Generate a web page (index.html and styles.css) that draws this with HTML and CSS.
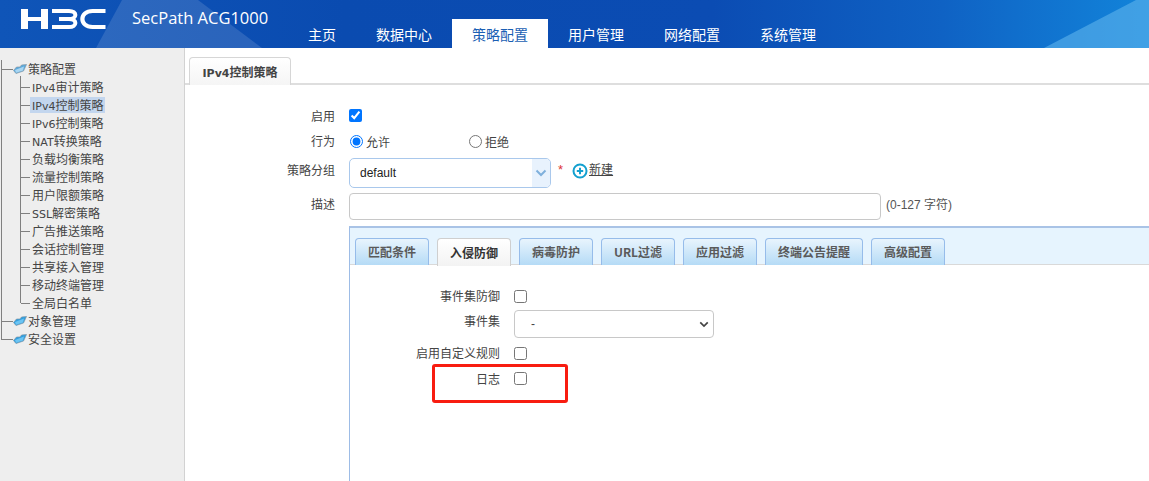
FILE: index.html
```html
<!DOCTYPE html>
<html lang="zh-CN">
<head>
<meta charset="utf-8">
<title>SecPath ACG1000</title>
<link rel="stylesheet" href="styles.css">
</head>
<body>
<header class="top">
  <svg class="top-art" viewBox="0 0 1149 48" preserveAspectRatio="none" aria-hidden="true">
    <polygon points="122,0 198,0 262,48 96,48" fill="#ffffff" fill-opacity="0.13"/>
    <polygon points="1149,0 1136,0 1044,48 1149,48" fill="#5fb4ec" fill-opacity="0.6"/>
  </svg>
  <svg class="logo" viewBox="0 0 86 22" aria-hidden="true">
    <g fill="none" stroke="#fff">
      <path d="M4.500 1v20M24.500 1v20" stroke-width="7"/>
      <path d="M6 11h17" stroke-width="4"/>
      <path d="M32 3h17c8.500 0 8.500 8 0 8h-10M49 11c8.500 0 8.500 8 0 8h-17" stroke-width="4"/>
      <path d="M85.500 3h-13c-13.500 0-13.500 16 0 16h13" stroke-width="4.200"/>
    </g>
  </svg>
  <div class="product">SecPath ACG1000</div>
  <nav class="nav">
    <a class="nav-item">主页</a>
    <a class="nav-item">数据中心</a>
    <a class="nav-item is-active">策略配置</a>
    <a class="nav-item">用户管理</a>
    <a class="nav-item">网络配置</a>
    <a class="nav-item">系统管理</a>
  </nav>
</header>

<div class="body">
  <aside class="side">
    <ul class="tree">
      <li class="root">
        <div class="root-row">
          <svg class="folder" viewBox="0 0 14 10" aria-hidden="true"><path d="M0.500 6.500 3.500 3 7 3 8.500 1 13.500 0.500 10.500 7 3 9.500Z" fill="#5aa9dd" stroke="#8a9aa5" stroke-width="0.700"/><path d="M2 6 11 2.500 10 6.500 3 8.800Z" fill="#a9d6f2"/></svg>
          <span>策略配置</span>
        </div>
        <ul class="leaves">
          <li class="leaf"><span><i class="en">IPv4</i>审计策略</span></li>
          <li class="leaf is-current"><span><i class="en">IPv4</i>控制策略</span></li>
          <li class="leaf"><span><i class="en">IPv6</i>控制策略</span></li>
          <li class="leaf"><span><i class="en">NAT</i>转换策略</span></li>
          <li class="leaf"><span>负载均衡策略</span></li>
          <li class="leaf"><span>流量控制策略</span></li>
          <li class="leaf"><span>用户限额策略</span></li>
          <li class="leaf"><span><i class="en">SSL</i>解密策略</span></li>
          <li class="leaf"><span>广告推送策略</span></li>
          <li class="leaf"><span>会话控制管理</span></li>
          <li class="leaf"><span>共享接入管理</span></li>
          <li class="leaf"><span>移动终端管理</span></li>
          <li class="leaf"><span>全局白名单</span></li>
        </ul>
      </li>
      <li class="root">
        <div class="root-row">
          <svg class="folder" viewBox="0 0 14 10" aria-hidden="true"><path d="M0.500 6.500 3.500 3 7 3 8.500 1 13.500 0.500 10.500 7 3 9.500Z" fill="#2f9fe0" stroke="#7f95a5" stroke-width="0.700"/><path d="M2 6 11 2.500 10 6.500 3 8.800Z" fill="#6cc4f2"/></svg>
          <span>对象管理</span>
        </div>
      </li>
      <li class="root">
        <div class="root-row">
          <svg class="folder" viewBox="0 0 14 10" aria-hidden="true"><path d="M0.500 6.500 3.500 3 7 3 8.500 1 13.500 0.500 10.500 7 3 9.500Z" fill="#2f9fe0" stroke="#7f95a5" stroke-width="0.700"/><path d="M2 6 11 2.500 10 6.500 3 8.800Z" fill="#6cc4f2"/></svg>
          <span>安全设置</span>
        </div>
      </li>
    </ul>
  </aside>

  <main class="main">
    <div class="page-tabs"><div class="page-tab"><i class="en">IPv4</i>控制策略</div></div>

    <form class="form">
      <div class="row row-enable">
        <label class="lbl">启用</label>
        <input class="check" type="checkbox" checked>
      </div>
      <div class="row row-action">
        <label class="lbl">行为</label>
        <span class="radio-opt radio-allow"><input class="radio" type="radio" name="act" checked><span class="radio-text">允许</span></span>
        <span class="radio-opt"><input class="radio" type="radio" name="act"><span class="radio-text">拒绝</span></span>
      </div>
      <div class="row row-group">
        <label class="lbl">策略分组</label>
        <div class="combo">
          <select class="combo-select"><option>default</option></select>
          <span class="combo-btn"><svg viewBox="0 0 12 8" aria-hidden="true"><path d="M1.500 1.500 6 6 10.500 1.500" fill="none" stroke="#7fb0dc" stroke-width="2"/></svg></span>
        </div>
        <span class="star">*</span>
        <a class="add">
          <svg class="add-ico" viewBox="0 0 16 16" aria-hidden="true"><circle cx="8" cy="8" r="6.500" fill="#fff" stroke="#13a0cf" stroke-width="2"/><path d="M8 4.800v6.400M4.800 8h6.400" stroke="#13a0cf" stroke-width="2"/></svg><span class="add-text">新建</span>
        </a>
      </div>
      <div class="row row-desc">
        <label class="lbl">描述</label>
        <input class="text-input" type="text">
        <span class="hint">(0-127 字符)</span>
      </div>
    </form>

    <section class="panel">
      <div class="sub-tabs">
        <span class="sub-tab">匹配条件</span>
        <span class="sub-tab is-active">入侵防御</span>
        <span class="sub-tab">病毒防护</span>
        <span class="sub-tab">URL过滤</span>
        <span class="sub-tab">应用过滤</span>
        <span class="sub-tab sub-tab-wide">终端公告提醒</span>
        <span class="sub-tab">高级配置</span>
      </div>
      <div class="panel-body">
        <div class="prow prow-a">
          <label class="plbl">事件集防御</label>
          <input class="check" type="checkbox">
        </div>
        <div class="prow prow-b">
          <label class="plbl">事件集</label>
          <div class="pselect-wrap">
            <select class="pselect"><option>-</option></select>
            <svg class="pselect-arrow" viewBox="0 0 12 8" aria-hidden="true"><path d="M1.500 1.500 6 6 10.500 1.500" fill="none" stroke="#444" stroke-width="2"/></svg>
          </div>
        </div>
        <div class="prow prow-c">
          <label class="plbl">启用自定义规则</label>
          <input class="check" type="checkbox">
        </div>
        <div class="prow prow-d">
          <label class="plbl">日志</label>
          <input class="check" type="checkbox">
        </div>
      </div>
    </section>
  </main>
</div>
<div class="mark"></div>
</body>
</html>
```
FILE: styles.css
```css
* { box-sizing: border-box; }
html, body { margin: 0; padding: 0; height: 100%; overflow: hidden; }
body {
  position: relative;
  background: #fff;
  color: #444;
  font-family: "Liberation Sans", "Noto Sans CJK SC", sans-serif;
  font-size: 12px;
  display: flex;
  flex-direction: column;
}
ul { list-style: none; margin: 0; padding: 0; }
.en { font-style: normal; font-family: "DejaVu Sans", sans-serif; font-size: 11px; }

/* header */
.top {
  position: relative;
  height: 48px;
  flex: none;
  display: flex;
  align-items: flex-start;
  background: linear-gradient(90deg, #0f55b8 0, #0a4bb0 30%, #0b4cb3 62%, #0f62c4 82%, #1284da 100%);
}
.top-art { position: absolute; inset: 0; width: 100%; height: 48px; }
.logo { position: relative; width: 86px; height: 22px; margin: 8px 0 0 20px; flex: none; }
.product {
  position: relative;
  width: 156px;
  margin: 8px 0 0 26px;
  color: #fff;
  font-family: "Open Sans", "Liberation Sans", sans-serif;
  font-size: 16.500px;
  line-height: 20px;
  white-space: nowrap;
  flex: none;
}
.nav { position: relative; display: flex; height: 29px; margin-top: 19px; }
.nav-item {
  padding: 0 20px;
  color: #fff;
  font-family: "Noto Sans CJK SC", sans-serif;
  font-size: 14px;
  line-height: 30px;
}
.nav-item.is-active { background: #fff; color: #1a5fb4; }

/* layout */
.body { flex: 1; display: flex; min-height: 0; }
.side {
  width: 185px;
  flex: none;
  background: #eeeeee;
  border-right: 1px solid #d2d2d2;
  padding-top: 12px;
}
.tree { position: relative; color: #444; }
.tree::before {
  content: "";
  position: absolute;
  left: 1px; top: 0; height: 280px;
  border-left: 1px solid #808080;
}
.root-row { position: relative; height: 18px; display: flex; align-items: center; padding-left: 13px; }
.root-row::before {
  content: "";
  position: absolute;
  left: 2px; top: 9px; width: 11px;
  border-top: 1px solid #808080;
}
.folder { width: 14px; height: 10px; margin-right: 1px; flex: none; }
.root-row span { font-size: 12px; line-height: 18px; font-family: "Noto Sans CJK SC", sans-serif; }
.leaves { position: relative; }
.leaves::before {
  content: "";
  position: absolute;
  left: 20px; top: -2px; height: 227px;
  border-left: 1px solid #808080;
}
.leaf { position: relative; height: 18px; padding-left: 30px; display: flex; align-items: center; }
.leaf::before {
  content: "";
  position: absolute;
  left: 21px; top: 9px; width: 9px;
  border-top: 1px solid #808080;
}
.leaf span {
  display: block;
  padding: 0 2px;
  height: 16px;
  line-height: 16px;
  font-family: "Noto Sans CJK SC", sans-serif;
  font-size: 12px;
  white-space: nowrap;
}
.is-current span { background: #c3d6ee; }

/* main */
.main { flex: 1; min-width: 0; display: flex; flex-direction: column; }
.page-tabs { height: 37px; flex: none; padding: 9px 0 0 4px; border-bottom: 2px solid #dedede; }
.page-tab {
  width: 102px;
  height: 28px;
  background: linear-gradient(#ffffff, #f5f5f5);
  border: 1px solid #d6d6d6;
  border-bottom: 0;
  border-radius: 4px 4px 0 0;
  text-align: center;
  font-family: "Noto Sans CJK SC", sans-serif;
  font-size: 12px;
  font-weight: bold;
  line-height: 27px;
  color: #444;
}
.form { padding-top: 21px; flex: none; }
.row { display: flex; align-items: center; }
.lbl {
  width: 150px;
  text-align: right;
  font-family: "Noto Sans CJK SC", sans-serif;
  font-size: 12px;
  line-height: 18px;
  color: #444;
  flex: none;
}
.check { margin: 0; width: 13px; height: 13px; flex: none; }
.row-enable { height: 20px; }
.row-enable .check { margin-left: 14px; margin-top: -1px; }
.row-action { height: 26px; margin-top: 2px; }
.radio-opt { display: flex; align-items: center; }
.radio { margin: 0; width: 13px; height: 13px; }
.radio-allow { width: 119px; margin-left: 15px; }
.radio-text { margin-left: 3px; margin-top: 2px; font-family: "Noto Sans CJK SC", sans-serif; line-height: 18px; }
.row-group { height: 30px; margin-top: 4px; }
.row-group .lbl { margin-top: -6px; }
.combo {
  position: relative;
  width: 202px;
  height: 30px;
  margin-left: 14px;
  border: 1px solid #a9c8ec;
  border-radius: 5px;
  background: #fff;
  overflow: hidden;
  flex: none;
}
.combo-select {
  appearance: none;
  width: 100%;
  height: 28px;
  border: 0;
  outline: 0;
  background: transparent;
  padding: 0 0 0 10px;
  font-family: "Liberation Sans", sans-serif;
  font-size: 12px;
  color: #222;
}
.combo-btn {
  position: absolute;
  right: 0; top: 0;
  width: 18px; height: 28px;
  background: #e8f2fd;
  display: flex;
  align-items: center;
  justify-content: center;
}
.combo-btn svg { width: 12px; height: 8px; }
.star { margin: -6px 0 0 7px; color: #d33; font-size: 13px; line-height: 14px; }
.add { display: flex; align-items: center; margin: -8px 0 0 9px; }
.add-ico { width: 16px; height: 16px; margin-top: 3px; }
.add-text { margin-left: 1px; font-family: "Noto Sans CJK SC", sans-serif; text-decoration: underline; color: #444; line-height: 18px; }
.row-desc { height: 27px; margin-top: 5px; }
.row-desc .lbl { margin-top: -6px; }
.text-input {
  width: 532px;
  height: 27px;
  margin-left: 14px;
  border: 1px solid #c8c8c8;
  border-radius: 4px;
  background: #fff;
  flex: none;
}
.hint { margin-left: 5px; font-family: "Liberation Sans", "Noto Sans CJK SC", sans-serif; color: #555; margin-top: -7px; }

/* sub-panel */
.panel {
  flex: 1;
  margin: 6px 0 0 164px;
  border-left: 1px solid #9dbce6;
  border-top: 2px solid #a9c3e6;
  display: flex;
  flex-direction: column;
  min-height: 0;
}
.sub-tabs {
  height: 37px;
  flex: none;
  display: flex;
  gap: 8px;
  padding: 10px 0 0 5px;
  background: #e6f4fe;
  border-bottom: 1px solid #d9d9d9;
}
.sub-tab {
  width: 74px;
  height: 27px;
  border: 1px solid #96bcea;
  border-bottom: 0;
  border-radius: 4px 4px 0 0;
  background: linear-gradient(#e8f4fd, #b5dbf6);
  text-align: center;
  font-family: "Noto Sans CJK SC", sans-serif;
  font-size: 12px;
  font-weight: 700;
  line-height: 25px;
  color: #5a5a5a;
  flex: none;
}
.sub-tab.is-active {
  height: 28px;
  margin-bottom: -1px;
  background: linear-gradient(#ffffff, #f3f3f3);
  border-color: #cfcfcf;
  color: #333;
  line-height: 28px;
}
.sub-tab-wide { width: 98px; }
.panel-body { flex: 1; padding-top: 22px; }
.prow { display: flex; align-items: center; }
.plbl {
  width: 150px;
  text-align: right;
  font-family: "Noto Sans CJK SC", sans-serif;
  font-size: 12px;
  line-height: 18px;
  color: #444;
  flex: none;
}
.prow .check { margin-left: 14px; }
.prow-a { height: 18px; }
.prow-b { height: 28px; margin-top: 5px; }
.prow-b .plbl { margin-top: -6px; }
.pselect-wrap { position: relative; width: 200px; height: 28px; margin-left: 14px; flex: none; }
.pselect {
  appearance: none;
  width: 100%;
  height: 100%;
  border: 1px solid #c8c8c8;
  border-radius: 4px;
  background: #fff;
  padding: 0 0 0 16px;
  font-family: "Liberation Sans", sans-serif;
  font-size: 12px;
  color: #444;
}
.pselect-arrow { position: absolute; right: 5px; top: 11px; width: 10px; height: 7px; }
.prow-c { height: 18px; margin-top: 6px; }
.prow-d { height: 18px; margin-top: 8px; }
.prow-d .check { margin-top: -2px; }

/* red annotation drawn over the screenshot */
.mark {
  position: absolute;
  left: 432px;
  top: 364px;
  width: 136px;
  height: 39px;
  border: 3px solid #f81c10;
  border-radius: 3px;
}
```
